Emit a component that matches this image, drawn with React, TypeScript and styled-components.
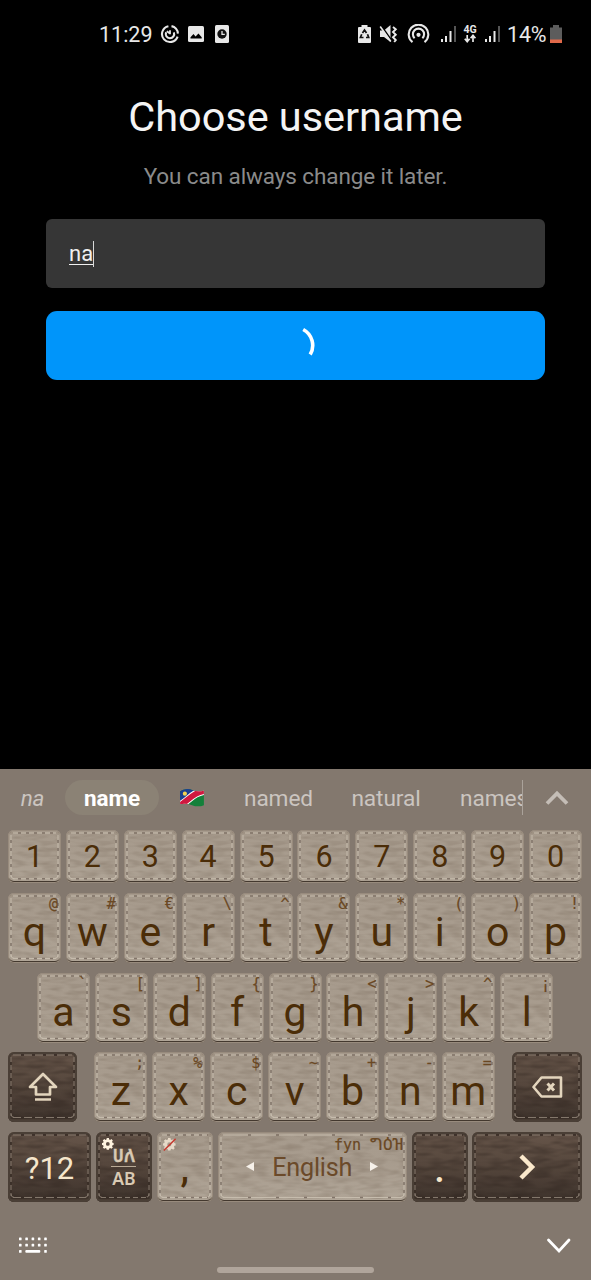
import React from 'react';
import styled, { createGlobalStyle, css } from 'styled-components';

const Global = createGlobalStyle`
  * { box-sizing: border-box; }
  body { margin: 0; background: #000; font-family: Roboto, "Noto Sans", sans-serif; }
`;

const Screen = styled.div`
  width: 591px;
  height: 1280px;
  display: flex;
  flex-direction: column;
  background: #000;
  overflow: hidden;
`;

const Filters = styled.svg`
  position: absolute;
`;

const StatusBar = styled.header`
  height: 68px;
  padding: 0 29px 0 99px;
  display: flex;
  justify-content: space-between;
  align-items: center;
  color: #e8e8e8;
  font-size: 21.5px;
`;

const StatusGroup = styled.div`
  display: flex;
  align-items: center;
  svg { display: block; flex: none; }
`;

const StatusIcon = styled.svg<{ $before?: number }>`
  margin-left: ${p => p.$before ?? 0}px;
`;

const Clock = styled.span`
  width: 61px;
  line-height: 26px;
  padding-top: 1px;
`;

const Percent = styled.span`
  line-height: 26px;
  padding-top: 1px;
  width: 43px;
  margin-left: 6px;
  letter-spacing: -0.2px;
`;

const Form = styled.main`
  flex: 1;
  display: flex;
  flex-direction: column;
  align-items: center;
  padding: 25px 46px 0;
`;

const Title = styled.h1`
  margin: 0;
  font-size: 41.5px;
  font-weight: 400;
  line-height: 48px;
  color: #f4f4f4;
  letter-spacing: -0.05px;
  white-space: nowrap;
`;

const Subtitle = styled.p`
  margin: 21px 0 0;
  font-size: 22.5px;
  line-height: 28px;
  color: #8b8b8b;
  letter-spacing: -0.1px;
  white-space: nowrap;
`;

const Field = styled.div`
  width: 499px;
  height: 69px;
  margin-top: 29px;
  padding-left: 23px;
  border-radius: 6px;
  background: #363636;
  display: flex;
  align-items: center;
`;

const Typed = styled.span`
  font-size: 22px;
  line-height: 26px;
  color: #f0f0f0;
  border-right: 1px solid #d8d8d8;
  text-decoration: underline;
  text-decoration-thickness: 1px;
  text-underline-offset: 3px;
  text-decoration-skip-ink: none;
`;

const Submit = styled.button`
  width: 499px;
  height: 69px;
  margin-top: 23px;
  padding: 0 0 2px;
  border: 0;
  border-radius: 11px;
  background: #0095fa;
  display: flex;
  align-items: center;
  justify-content: center;
`;

const Keyboard = styled.section`
  height: 511px;
  background: #83786e;
  display: flex;
  flex-direction: column;
`;

const Suggestions = styled.div`
  height: 61px;
  padding: 11px 0 15px;
  display: grid;
  grid-template-columns: 65px 94px 66px 107px 108px 83px 1fr;
  font-size: 22.7px;
  color: #cbc5c0;
`;

const Suggestion = styled.div<{ $kind?: 'typed' | 'best' | 'cut' }>`
  display: flex;
  align-items: center;
  justify-content: center;
  white-space: nowrap;
  padding-top: 1px;
  letter-spacing: -0.1px;
  ${p => p.$kind === 'typed' && css`font-style: italic; font-size: 22.5px;`}
  ${p => p.$kind === 'best' && css`
    padding-top: 0; font-weight: 700; font-size: 22.5px; color: #fff; background: #8b8275; border-radius: 18px;
  `}
  ${p => p.$kind === 'cut' && css`
    justify-content: flex-start; padding-left: 20px; overflow: hidden; border-right: 1px solid #aaa29a;
  `}
`;

const Rows = styled.div`
  display: flex;
  flex-direction: column;
  gap: 9.7px;
`;

const Row = styled.div<{ $indent?: number }>`
  display: flex;
  gap: 4.9px;
  padding-left: ${p => p.$indent ?? 8}px;
`;

const KeyCap = styled.div<{ $w: number; $h: number; $dark?: boolean; $before?: number; $after?: number }>`
  position: relative;
  flex: none;
  width: ${p => p.$w}px;
  height: ${p => p.$h}px;
  margin-left: ${p => p.$before ?? 0}px;
  margin-right: ${p => p.$after ?? 0}px;
  border-radius: 6px;
  overflow: hidden;
  display: flex;
  align-items: center;
  justify-content: center;
  ${p => p.$dark
    ? css`
      color: #f6e6cb;
      background: linear-gradient(#67564a, #56473d 45%, #3d322b);
      box-shadow: inset 0 0 0 2.5px #4a3f36, inset 0 -3px 0 #44392f;
    `
    : css`
      color: #4b2d08;
      background: linear-gradient(#a69a8c, #a89c8e 45%, #b0a597);
      box-shadow: inset 0 0 0 1px #988b7d, inset 0 -2px 0 #43382e;
    `}
`;

const Surface = styled.svg`
  position: absolute;
  inset: 0;
  display: block;
`;

const Label = styled.span<{ $size: number; $drop?: number; $weight?: number }>`
  position: relative;
  font-size: ${p => p.$size}px;
  font-weight: ${p => p.$weight ?? 400};
  line-height: 1;
  padding-top: ${p => p.$drop ?? 0}px;
`;

const Hint = styled.span`
  position: absolute;
  top: 3px;
  right: 3px;
  font-family: "DejaVu Sans Mono", monospace;
  font-size: 15px;
  line-height: 17px;
  color: #6a4824;
  -webkit-text-stroke: 0.2px #6a4824;
  white-space: pre;
`;

const Geez = styled.span`
  font-family: "Noto Sans Ethiopic", "Noto Sans", sans-serif;
  font-size: 17px;
`;

const SpaceContent = styled.div`
  position: relative;
  width: 132px;
  display: flex;
  align-items: center;
  justify-content: space-between;
  font-size: 25.2px;
  letter-spacing: -0.2px;
  color: #6b4a2a;
  line-height: 1;
  padding-top: 1px;
`;

const Arrow = styled.svg`
  display: block;
  margin-bottom: 3px;
`;

const Glyph = styled.svg`
  position: relative;
  display: block;
`;

const CornerIcon = styled.svg`
  position: absolute;
  left: 6px;
  top: 6px;
`;

const Scripts = styled.div`
  position: relative;
  display: flex;
  flex-direction: column;
  align-items: center;
  font-family: "Noto Sans", sans-serif;
  font-weight: 600;
  font-size: 17.5px;
  line-height: 20px;
  color: #d9cab4;
`;

const ScriptTop = styled.span`
  font-family: "Noto Sans", "Noto Sans Ethiopic", sans-serif;
  font-size: 18px;
  width: 28px;
  height: 18px;
  line-height: 18px;
  text-align: center;
  -webkit-text-stroke: 0.4px #d9cab4;
`;

const ScriptRule = styled.span`
  width: 25px;
  height: 1.5px;
  margin: 2px 0 1px;
  background: #b9aa96;
`;

const NavBar = styled.footer`
  flex: 1;
  padding: 34px 19px 0;
  display: grid;
  grid-template-columns: 1fr 157px 1fr;
  align-items: start;
`;

const NavStart = styled.div`
  padding-top: 1px;
`;

const NavEnd = styled.div`
  display: flex;
  justify-content: flex-end;
`;

const HomePill = styled.div`
  height: 6px;
  margin-top: 31px;
  border-radius: 3px;
  background: #b0a59b;
`;

function KeySurface({ w, h, dark }: { w: number; h: number; dark?: boolean }) {
  const light = dark ? '#83776b' : '#c6bcad';
  const hole = dark ? '#382d26' : '#82756a';
  const period = w > 150 ? 28 : w > 65 ? 11 : 8;
  const b = h - 4.5;
  const r = w - 3;
  return (
    <Surface width={w} height={h} fill="none">
      <rect x="2" y="2" width={w - 4} height={h - 5} filter={dark ? 'url(#hide)' : 'url(#leather)'} />
      <g stroke={light} strokeWidth="1">
        <path d={`M5 3H${w - 5}M5 ${b}H${w - 5}`} strokeDasharray={`${period - 3} 3`} />
        <path d={`M3 5V${h - 6}M${r} 5V${h - 6}`} strokeDasharray="5 3" />
        <path d={`M3 ${h - 8}q0 3.5 3.5 3.5M${r} ${h - 8}q0 3.5 -3.5 3.5`} />
      </g>
      <g stroke={hole} strokeWidth="1.4">
        <path d={`M5 3H${w - 5}M5 ${b}H${w - 5}`} strokeDasharray={`3 ${period - 3}`} strokeDashoffset={3 - period} />
        <path d={`M3 5V${h - 7}M${r} 5V${h - 7}`} strokeDasharray="3 5" strokeDashoffset="-5" />
      </g>
    </Surface>
  );
}

type KeyProps = {
  w?: number;
  h?: number;
  dark?: boolean;
  before?: number;
  after?: number;
  hint?: React.ReactNode;
  children: React.ReactNode;
};

function Key({ w = 53, h = 70, dark, before, after, hint, children }: KeyProps) {
  return (
    <KeyCap $w={w} $h={h} $dark={dark} $before={before} $after={after}>
      <KeySurface w={w} h={h} dark={dark} />
      {hint && <Hint>{hint}</Hint>}
      {children}
    </KeyCap>
  );
}

const digits = '1234567890'.split('');
const topRow = ['q@', 'w#', 'e€', 'r\\', 't^', 'y&', 'u*', 'i(', 'o)', 'p!'];
const homeRow = ['a`', 's[', 'd]', 'f{', 'g}', 'h<', 'j>', 'k^', 'l¡'];
const bottomRow = ['z;', 'x%', 'c$', 'v~', 'b+', 'n-', 'm='];

const letters = (row: string[]) =>
  row.map(k => (
    <Key key={k} hint={k[1]}>
      <Label $size={41} $drop={9}>{k[0]}</Label>
    </Key>
  ));

const gearPath =
  'M5.5 0h3l.4 2 1.3.6 1.7-1.1 2 2-1.1 1.7.6 1.3 1.6.4v2.6l-1.6.4-.6 1.3 1.1 1.7-2 2-1.7-1.1-1.3.6-.4 1.6h-3l-.4-1.6-1.3-.6-1.7 1.1-2-2 1.1-1.7L.6 9.9-1 9.5V6.9l1.6-.4.6-1.3L.1 3.5l2-2 1.7 1.1L5.1 2zM7 5.5a2.6 2.6 0 100 5.2 2.6 2.6 0 000-5.2z';

const Signal = ({ before }: { before: number }) => (
  <StatusIcon $before={before} width="16" height="18" fill="#e8e8e8">
    <rect x="0" y="14" width="2" height="3" />
    <rect x="4" y="11" width="2" height="6" />
    <rect x="8.5" y="6" width="2" height="11" />
    <rect x="13" y="1" width="2" height="16" fill="#555" />
  </StatusIcon>
);

export default function App() {
  return (
    <Screen>
      <Global />
      <Filters width="0" height="0">
        <filter id="leather" x="0" y="0" width="100%" height="100%" colorInterpolationFilters="sRGB">
          <feTurbulence type="fractalNoise" baseFrequency="0.06 0.22" numOctaves="2" seed="4" />
          <feColorMatrix values="0 0 0 0 .45  0 0 0 0 .39  0 0 0 0 .33  .7 0 0 0 -.26" />
        </filter>
        <filter id="hide" x="0" y="0" width="100%" height="100%" colorInterpolationFilters="sRGB">
          <feTurbulence type="fractalNoise" baseFrequency="0.05 0.18" numOctaves="2" seed="9" />
          <feColorMatrix values="0 0 0 0 .16  0 0 0 0 .12  0 0 0 0 .1  .8 0 0 0 -.28" />
        </filter>
      </Filters>

      <StatusBar>
        <StatusGroup>
          <Clock>11:29</Clock>
          <StatusIcon width="20" height="20" viewBox="0 0 20 20" fill="none" stroke="#e8e8e8" strokeWidth="2.1">
            <path d="M8.4 2.2A8 8 0 1017.6 12.6M11.5 2.1a8 8 0 016.4 7.5" />
            <path d="M6.2 8.2a4.2 4.2 0 107.6.2" />
            <path d="M10 6.2v4M6.8 7.2l3.5 2.6" strokeWidth="1.8" />
          </StatusIcon>
          <StatusIcon $before={8} width="16" height="16" viewBox="0 0 16 16">
            <rect width="16" height="16" rx="1.5" fill="#e8e8e8" />
            <path d="M2.5 12.5v-1.2l3-3.3 2 2.5L10.5 7.5l3.2 3.8v1.2z" fill="#000" />
          </StatusIcon>
          <StatusIcon $before={11} width="14" height="18" viewBox="0 0 14 18">
            <rect width="14" height="18" rx="1.5" fill="#e8e8e8" />
            <circle cx="7" cy="9" r="4.7" fill="#111" />
            <path d="M7 6v3.4h2.8" stroke="#e8e8e8" strokeWidth="1.3" fill="none" />
          </StatusIcon>
        </StatusGroup>
        <StatusGroup>
          <StatusIcon width="13" height="18" viewBox="0 0 13 18">
            <path d="M3.5 0h6v2H12a1 1 0 011 1v14a1 1 0 01-1 1H1a1 1 0 01-1-1V3a1 1 0 011-1h2.5z" fill="#e8e8e8" />
            <path d="M4.5 8L6.5 5l2 3M9.5 9.300l1.2 3.200H8M5.5 12.500H2.4l1.3-3.200" fill="none" stroke="#111" strokeWidth="1.7" />
          </StatusIcon>
          <StatusIcon $before={8} width="19" height="18" viewBox="0 0 19 18" fill="#e8e8e8">
            <path d="M1 5.5h4L11.5 0v17L5 12H1z" />
            <path d="M2.8 1.5L13 16" stroke="#000" strokeWidth="1.6" />
            <path d="M1.2 1.5L11.8 16.5" stroke="#e8e8e8" strokeWidth="1.6" />
            <path d="M14 2l2.8 2.3L14 7l2.8 2.7L14 12.3l2.8 2.7-1.6 2" fill="none" stroke="#e8e8e8" strokeWidth="1.9" />
          </StatusIcon>
          <StatusIcon $before={9} width="23" height="20" viewBox="0 0 23 20" fill="none" stroke="#e8e8e8" strokeWidth="2.1">
            <path d="M5.5 18.2a9.8 9.8 0 1112 0M7.6 14.2a5.6 5.6 0 117.8 0" />
            <circle cx="11.5" cy="10.8" r="2.1" fill="#e8e8e8" stroke="none" />
          </StatusIcon>
          <Signal before={11} />
          <StatusIcon $before={6} width="14" height="20" viewBox="0 0 14 20">
            <text x="7" y="8.5" textAnchor="middle" fontSize="10.5" fontWeight="700" fill="#e8e8e8">4G</text>
            <path d="M4.2 11v6M1.8 14.8l2.4 2.9 2.4-2.9M10 18v-6M7.6 14.2L10 11.3l2.4 2.9" fill="none" stroke="#e8e8e8" strokeWidth="1.7" />
          </StatusIcon>
          <Signal before={8} />
          <Percent>14%</Percent>
          <StatusIcon width="12" height="18" viewBox="0 0 12 18">
            <path d="M3 0h6v2.5h3V18H0V2.500h3z" fill="#5c5c5c" />
            <rect y="14.5" width="12" height="3.5" fill="#e0694a" />
          </StatusIcon>
        </StatusGroup>
      </StatusBar>

      <Form>
        <Title>Choose username</Title>
        <Subtitle>You can always change it later.</Subtitle>
        <Field><Typed>na</Typed></Field>
        <Submit>
          <Glyph width="40" height="40" viewBox="0 0 40 40" fill="none">
            <path d="M27.200 4.500A18 18 0 0134.200 29.500" stroke="#fff" strokeWidth="3.600" />
          </Glyph>
        </Submit>
      </Form>

      <Keyboard>
        <Suggestions>
          <Suggestion $kind="typed">na</Suggestion>
          <Suggestion $kind="best">name</Suggestion>
          <Suggestion>
            <svg width="26" height="20" viewBox="0 0 27 21">
              <defs>
                <clipPath id="wave"><path d="M1 3.500Q7-.5 13.500 2T26 2.500V18Q20 20.500 13.500 18T1 17z" /></clipPath>
              </defs>
              <g clipPath="url(#wave)">
                <rect width="27" height="21" fill="#14803a" />
                <path d="M0 0h27L0 19z" fill="#1b3f90" />
                <path d="M-1 19C9 15 14 4 28 3" stroke="#fff" strokeWidth="8" fill="none" />
                <path d="M-1 19C9 15 14 4 28 3" stroke="#d0183f" strokeWidth="6" fill="none" />
                <circle cx="6" cy="6" r="2.2" fill="#f3d351" />
              </g>
            </svg>
          </Suggestion>
          <Suggestion>named</Suggestion>
          <Suggestion>natural</Suggestion>
          <Suggestion $kind="cut">names</Suggestion>
          <Suggestion>
            <svg width="24" height="16" viewBox="0 0 24 16" fill="none" stroke="#c4bdb6" strokeWidth="3.8">
              <path d="M2 13.500l10-10 10 10" />
            </svg>
          </Suggestion>
        </Suggestions>

        <Rows>
          <Row>{digits.map(d => <Key key={d} h={53.3}><Label $size={30.5} $drop={2}>{d}</Label></Key>)}</Row>
          <Row>{letters(topRow)}</Row>
          <Row $indent={37}>{letters(homeRow)}</Row>
          <Row>
            <Key w={69} dark after={12.5}>
              <Glyph width="30" height="30" viewBox="0 0 30 30" fill="none" stroke="#e3d5bd" strokeWidth="2.7" strokeLinejoin="round">
                <path d="M15 2L2 15H8V22.500h14V15h6z" />
                <path d="M7 27.500h16" />
              </Glyph>
            </Key>
            {letters(bottomRow)}
            <Key w={70} dark before={12.8}>
              <Glyph width="31" height="22" viewBox="0 0 31 22" fill="none" stroke="#e3d5bd" strokeWidth="2.6" strokeLinejoin="round">
                <path d="M9.500 1.500H29v19H9.500L1.500 11z" />
                <path d="M15.500 7.500l6.500 7M22 7.500l-6.500 7" strokeWidth="3" />
              </Glyph>
            </Key>
          </Row>
          <Row>
            <Key w={83} dark><Label $size={31} $drop={2}>?12</Label></Key>
            <Key w={56} dark>
              <CornerIcon width="12" height="12" viewBox="-1 0 16.5 16.5"><path d={gearPath} fill="#fff3df" fillRule="evenodd" /></CornerIcon>
              <Scripts>
                <ScriptTop>ሀለ</ScriptTop>
                <ScriptRule />
                <span>AB</span>
              </Scripts>
            </Key>
            <Key w={56}>
              <CornerIcon width="13" height="13" viewBox="-1 0 16.5 16.5">
                <path d={gearPath} fill="#e6d9c8" fillRule="evenodd" />
                <path d="M0 16L15 1" stroke="#c43a30" strokeWidth="1.8" />
              </CornerIcon>
              <Label $size={38} $drop={2} $weight={500}>,</Label>
            </Key>
            <Key w={189} hint={<>fyn <Geez>ግዕዝ</Geez></>}>
              <SpaceContent>
                <Arrow width="8" height="9"><path d="M8 0v9L0 4.500z" fill="#f6f1ea" /></Arrow>
                English
                <Arrow width="8" height="9"><path d="M0 0v9l8-4.500z" fill="#f6f1ea" /></Arrow>
              </SpaceContent>
            </Key>
            <Key w={56} dark><Label $size={38} $drop={4} $weight={500}>.</Label></Key>
            <Key w={110} dark>
              <Glyph width="18" height="28" viewBox="0 0 18 28" fill="none" stroke="#fbe9cc" strokeWidth="4.5">
                <path d="M3 3l11 11L3 25" />
              </Glyph>
            </Key>
          </Row>
        </Rows>

        <NavBar>
          <NavStart>
            <svg width="28" height="18" viewBox="0 0 28 18" fill="#fff">
              {[0, 6.3].flatMap(y => [0, 6.3, 12.6, 18.9, 25.2].map(x => <rect key={`${x}-${y}`} x={x} y={y + 0.5} width="2.6" height="2.8" rx=".6" />))}
              <rect x="0" y="13" width="2.6" height="2.8" rx=".6" />
              <rect x="6.3" y="13" width="15" height="2.8" rx="1" />
              <rect x="25.2" y="13" width="2.6" height="2.8" rx=".6" />
            </svg>
          </NavStart>
          <HomePill />
          <NavEnd>
            <svg width="26" height="20" viewBox="0 0 26 20" fill="none" stroke="#fff" strokeWidth="2.8" strokeLinecap="round">
              <path d="M2.500 4L13 15 23 4" />
            </svg>
          </NavEnd>
        </NavBar>
      </Keyboard>
    </Screen>
  );
}
